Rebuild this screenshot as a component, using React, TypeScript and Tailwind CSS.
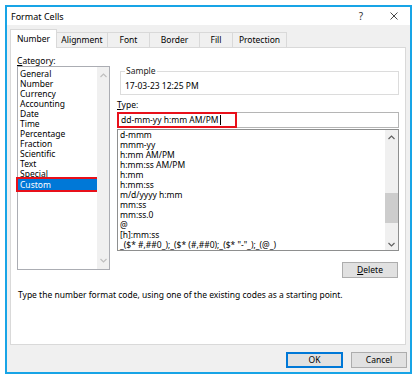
import React from "react";

const font = { fontFamily: '"Noto Sans", "Liberation Sans", sans-serif' };

function ChevUp({ color = "#606060" }: { color?: string }) {
  return (
    <svg width="7" height="5" viewBox="0 0 7 5">
      <polyline points="0.5,4 3.5,1 6.5,4" fill="none" stroke={color} strokeWidth="1.2" />
    </svg>
  );
}
function ChevDown({ color = "#606060" }: { color?: string }) {
  return (
    <svg width="7" height="5" viewBox="0 0 7 5">
      <polyline points="0.5,1 3.5,4 6.5,1" fill="none" stroke={color} strokeWidth="1.2" />
    </svg>
  );
}

const categories = [
  "General",
  "Number",
  "Currency",
  "Accounting",
  "Date",
  "Time",
  "Percentage",
  "Fraction",
  "Scientific",
  "Text",
  "Special",
  "Custom",
];

const types = [
  "d-mmm",
  "mmm-yy",
  "h:mm AM/PM",
  "h:mm:ss AM/PM",
  "h:mm",
  "h:mm:ss",
  "m/d/yyyy h:mm",
  "mm:ss",
  "mm:ss.0",
  "@",
  "[h]:mm:ss",
  '_($* #,##0_);_($* (#,##0);_($* "-"_);_(@_)',
];

const tabs = [
  { name: "Number", w: 47 },
  { name: "Alignment", w: 51 },
  { name: "Font", w: 42 },
  { name: "Border", w: 50 },
  { name: "Fill", w: 33 },
  { name: "Protection", w: 54 },
];

export default function App() {
  return (
    <div className="w-[419px] h-[381px] bg-white pt-[5px] pl-[5px] text-[8.5px] text-black" style={font}>
      <div className="w-[407px] h-[369px] border-2 border-[#18a4e6] flex flex-col bg-[#f0f0f0]">
        {/* title bar */}
        <div className="h-[18px] bg-white flex items-center pl-[4px] pr-[12px]">
          <span className="text-[9px] leading-none">Format Cells</span>
          <div className="flex-1" />
          <span className="text-[10px] leading-none text-[#333] mr-[27px]">?</span>
          <svg width="8" height="8" viewBox="0 0 8 8">
            <line x1="0.5" y1="0.5" x2="7.5" y2="7.5" stroke="#333" strokeWidth="0.9" />
            <line x1="7.5" y1="0.5" x2="0.5" y2="7.5" stroke="#333" strokeWidth="0.9" />
          </svg>
        </div>
        {/* body */}
        <div className="flex flex-col pl-[3px] pr-[3px] pt-[5px]">
          {/* tabs */}
          <div className="h-[17px] flex items-end relative z-10">
            {tabs.map((t, i) =>
              i === 0 ? (
                <div
                  key={t.name}
                  style={{ width: t.w }}
                  className="h-[19px] -mb-[1px] bg-white border border-b-0 border-[#d9d9d9] flex items-center justify-center text-[8.5px]"
                >
                  {t.name}
                </div>
              ) : (
                <div
                  key={t.name}
                  style={{ width: t.w }}
                  className="h-[15px] border border-l-0 border-b-0 border-[#d9d9d9] flex items-center justify-center text-[8.5px]"
                >
                  {t.name}
                </div>
              )
            )}
          </div>
          {/* panel */}
          <div className="h-[298px] mr-[1px] bg-white border border-[#d9d9d9] flex flex-col px-[6px] pt-[8px]">
            <div className="flex">
              {/* category column */}
              <div className="w-[93px] flex flex-col">
                <div className="h-[10px] leading-[10px]">
                  <span className="underline">C</span>ategory:
                </div>
                <div className="h-[204px] border border-[#abadb3] flex">
                  <div className="flex-1 flex flex-col pt-[2px]">
                    {categories.map((c) =>
                      c === "Custom" ? (
                        <div
                          key={c}
                          className="h-[11px] leading-[11px] pl-[2px] bg-[#0078d7] text-white outline-2 outline-[#e8101a]"
                        >
                          {c}
                        </div>
                      ) : (
                        <div key={c} className="h-[10px] leading-[10px] pl-[2px]">
                          {c}
                        </div>
                      )
                    )}
                  </div>
                  <div className="w-[12px] bg-[#f0f0f0] flex flex-col items-center justify-between py-[6px]">
                    <ChevUp color="#bfbfbf" />
                    <ChevDown color="#bfbfbf" />
                  </div>
                </div>
              </div>
              {/* right column */}
              <div className="flex-1 ml-[7px] flex flex-col">
                <fieldset className="mt-[10px] h-[29px] ml-[3px] border border-[#dcdcdc] px-[4px] pb-[2px]">
                  <legend className="px-[1px] leading-[10px] text-[#222]">Sample</legend>
                  <div className="leading-[10px] mt-[5px]">17-03-23 12:25 PM</div>
                </fieldset>
                <div className="mt-[5px] h-[10px] leading-[10px]">
                  <span className="underline">T</span>ype:
                </div>
                <div className="relative mt-[2px] h-[16px] border border-[#b5b5b5] bg-white flex items-center pl-[3px]">
                  <span>dd-mm-yy h:mm AM/PM</span>
                  <span className="w-[1px] h-[10px] bg-black ml-[1px]" />
                  <div className="absolute -left-[1px] -top-[1px] w-[120px] h-[16px] border-2 border-[#e8101a]" />
                </div>
                <div className="mt-[1px] h-[122px] border border-[#8e8f8f] flex">
                  <div className="flex-1 flex flex-col pl-[2px] overflow-hidden whitespace-nowrap">
                    {types.map((t) => (
                      <div key={t} className="h-[10px] leading-[10px]">
                        {t}
                      </div>
                    ))}
                  </div>
                  <div className="w-[13px] bg-[#f0f0f0] flex flex-col items-center">
                    <div className="h-[14px] flex items-center">
                      <ChevUp />
                    </div>
                    <div className="mt-[49px] w-full h-[30px] bg-[#cdcdcd]" />
                    <div className="flex-1" />
                    <div className="h-[12px] flex items-center">
                      <ChevDown />
                    </div>
                  </div>
                </div>
                <div className="mt-[11px] self-end mr-[1px] w-[56px] h-[16px] bg-[#e1e1e1] border border-[#adadad] flex items-center justify-center">
                  <span>
                    <span className="underline">D</span>elete
                  </span>
                </div>
              </div>
            </div>
            <div className="mt-[12px] h-[10px] leading-[10px] pl-[1px]">
              Type the number format code, using one of the existing codes as a starting point.
            </div>
          </div>
          {/* buttons */}
          <div className="flex justify-end gap-[8px] pt-[7px]">
            <div className="w-[57px] h-[16px] bg-[#e1e1e1] border-2 border-[#0078d7] flex items-center justify-center">
              OK
            </div>
            <div className="w-[56px] h-[16px] bg-[#e1e1e1] border border-[#adadad] flex items-center justify-center">
              Cancel
            </div>
          </div>
        </div>
      </div>
    </div>
  );
}
